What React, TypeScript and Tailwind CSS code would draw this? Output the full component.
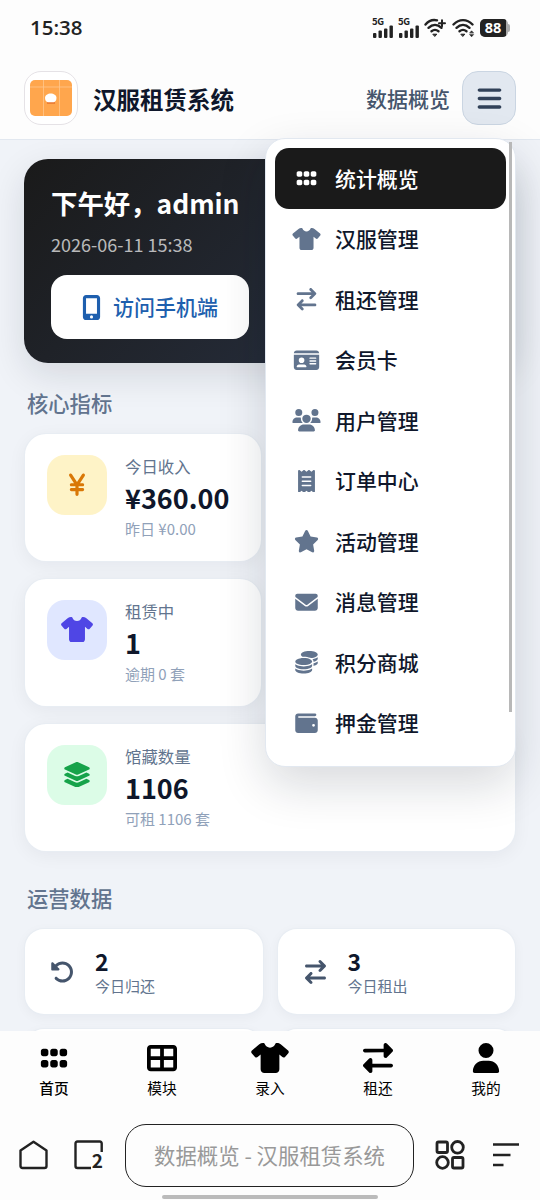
import type { ReactNode } from "react";
import type { IconType } from "react-icons";
import {
    FaArrowRightArrowLeft,
    FaBars,
    FaCoins,
    FaEnvelope,
    FaGrip,
    FaIdCard,
    FaLayerGroup,
    FaMobileScreenButton,
    FaReceipt,
    FaRightLeft,
    FaRotateLeft,
    FaShirt,
    FaStar,
    FaTableCellsLarge,
    FaUser,
    FaUsers,
    FaWallet,
    FaYenSign,
} from "react-icons/fa6";

const menuItems: { icon: IconType; label: string }[] = [
    { icon: FaGrip, label: "统计概览" },
    { icon: FaShirt, label: "汉服管理" },
    { icon: FaArrowRightArrowLeft, label: "租还管理" },
    { icon: FaIdCard, label: "会员卡" },
    { icon: FaUsers, label: "用户管理" },
    { icon: FaReceipt, label: "订单中心" },
    { icon: FaStar, label: "活动管理" },
    { icon: FaEnvelope, label: "消息管理" },
    { icon: FaCoins, label: "积分商城" },
    { icon: FaWallet, label: "押金管理" },
];

const navItems: { icon: IconType; label: string }[] = [
    { icon: FaGrip, label: "首页" },
    { icon: FaTableCellsLarge, label: "模块" },
    { icon: FaShirt, label: "录入" },
    { icon: FaRightLeft, label: "租还" },
    { icon: FaUser, label: "我的" },
];

function Signal() {
    return (
        <div className="w-[21px]">
            <div className="h-[7px] text-[9.5px] leading-[7px] font-bold tracking-tight">5G</div>
            <svg viewBox="0 0 21 13" className="block h-[13px] w-[21px]" fill="currentColor">
                <rect x="1" y="8" width="3.4" height="5" rx="1" />
                <rect x="6.5" y="5.5" width="3.4" height="7.5" rx="1" />
                <rect x="12" y="3.5" width="3.4" height="9.5" rx="1" />
                <rect x="17.5" y="0.5" width="3.4" height="12.5" rx="1" />
            </svg>
        </div>
    );
}

function Wifi({ plus }: { plus?: boolean }) {
    return (
        <svg viewBox="0 0 23 20" className="h-5 w-[23px]" fill="none" stroke="currentColor" strokeWidth="2.4" strokeLinecap="round">
            <path d={plus ? "M1.5 6.5C5 2.3 9.5 1.5 13 2.3" : "M1.5 6.5C7 .7 15 .7 20.5 6.5"} />
            <path d="M4.5 9.8C8.5 6 13.5 6 17.5 9.8" />
            <path d="M7.5 13.2C10 11.3 12 11.3 14.5 13.2" />
            <path d="M9.2 16.2h3.6L11 18.2z" fill="currentColor" strokeWidth="1" />
            {plus ? (
                <path d="M18 2.2v6M15 5.2h6" strokeWidth="2" />
            ) : (
                <path d="M17.8 14.8l1.8-2 1.8 2zM17.8 16.8l1.8 2 1.8-2z" fill="currentColor" strokeWidth=".6" />
            )}
        </svg>
    );
}

function StatusBar() {
    return (
        <div className="flex h-14 items-center justify-between px-[30px] pb-px text-[#222]">
            <span className="font-['Open_Sans',sans-serif] text-[20.5px] font-semibold">15:38</span>
            <div className="flex items-center gap-[5px]">
                <Signal />
                <Signal />
                <Wifi plus />
                <Wifi />
                <div className="flex items-center">
                    <div className="flex h-[18px] w-[28px] overflow-hidden rounded-[5px] bg-[#aaa]">
                        <span className="w-[26px] bg-[#222] text-center font-['Open_Sans',sans-serif] text-[14.5px] leading-[18px] font-bold text-white">
                            88
                        </span>
                    </div>
                    <div className="h-2 w-[2px] rounded-r-full bg-[#aaa]" />
                </div>
            </div>
        </div>
    );
}

function Logo() {
    return (
        <div className="flex h-[54px] w-[54px] items-center justify-center rounded-[17px] border border-[#e5e2e6] bg-white">
            <svg viewBox="0 0 42 36" className="h-9 w-[42px]">
                <rect width="42" height="36" rx="5" fill="#ffa64d" />
                <path d="M0 7h42M13.5 0v36M29.5 0v36" stroke="#ffc68d" strokeWidth=".8" />
                <path d="M15 18c0-6 11.5-6 11.5 0 0 3-2 4-3 4.5h-5.5c-1-.5-3-1.5-3-4.5z" fill="#fff" />
                <path d="M17 23h8" stroke="#dc5a1e" strokeWidth="1" />
            </svg>
        </div>
    );
}

function Menu() {
    return (
        <div className="absolute top-[138px] left-[265px] z-20 h-[629px] w-[251px] rounded-[20px] border border-slate-200 bg-white px-[9px] pt-[9px] shadow-[0_18px_48px_rgba(15,23,42,0.16)]">
            {menuItems.map(({ icon: Icon, label }, i) => (
                <div
                    key={label}
                    className={`flex h-[60.5px] w-[231px] items-center gap-[14px] rounded-[14px] pl-[17px] text-[20.9px] font-medium ${
                        i === 0 ? "bg-[#1a1a1a] text-white" : "text-slate-900"
                    }`}
                >
                    <span className={`flex w-[29px] justify-center ${i === 0 ? "text-white" : "text-slate-500"}`}>
                        <Icon className="h-[22.5px] w-[29px] shrink-0" />
                    </span>
                    {label}
                </div>
            ))}
            <div className="absolute top-[3px] right-[3px] h-[570px] w-[3px] bg-[#b8b8b8]" />
        </div>
    );
}

interface StatProps {
    icon: IconType;
    tone: string;
    label: string;
    value: string;
    note: string;
    wide?: boolean;
}

function StatCard({ icon: Icon, tone, label, value, note, wide }: StatProps) {
    return (
        <div
            className={`flex h-[129px] rounded-[22px] border border-slate-200/80 bg-white pt-[21px] pl-[22px] shadow-[0_4px_18px_rgba(15,23,42,0.05)] ${
                wide ? "col-span-2" : "col-start-1"
            }`}
        >
            <div className={`flex h-[60px] w-[60px] items-center justify-center rounded-[18px] pb-px ${tone}`}>
                <Icon className="h-[25.5px] w-8" />
            </div>
            <div className="ml-[18px]">
                <div className="text-[16.4px] leading-[23px] text-slate-500">{label}</div>
                <div className="mt-px text-[27px] leading-[38px] font-bold text-slate-900">{value}</div>
                <div className="mt-px text-[15px] leading-[22px] text-slate-400">{note}</div>
            </div>
        </div>
    );
}

function SmallCard({ children }: { children?: ReactNode }) {
    return (
        <div className="flex h-[87px] items-center rounded-[20px] border border-slate-200/80 bg-white pl-[25px] shadow-[0_3px_12px_rgba(15,23,42,0.04)]">
            {children}
        </div>
    );
}

function SmallStat({ icon: Icon, value, label }: { icon: IconType; value: string; label: string }) {
    return (
        <SmallCard>
            <Icon className="h-6 w-[25px] shrink-0 text-slate-600" />
            <div className="ml-5">
                <div className="text-[23px] leading-[28px] font-bold text-slate-900">{value}</div>
                <div className="text-[15px] leading-[22px] text-slate-500">{label}</div>
            </div>
        </SmallCard>
    );
}

function BrowserBar() {
    return (
        <div className="relative flex h-[89px] items-center pt-1 pb-[5px]">
            <svg viewBox="0 0 30 30" className="ml-[19px] h-[30px] w-[30px]" fill="none" stroke="#222" strokeWidth="2.4" strokeLinejoin="round">
                <path d="M1.5 10.5L14.5 1.8l13 8.7V26q0 2-2 2h-22q-2 0-2-2z" />
            </svg>
            <div className="relative ml-[25px] h-[30px] w-[30px]">
                <svg viewBox="0 0 30 30" className="h-[30px] w-[30px]" fill="none" stroke="#222" strokeWidth="2.4">
                    <path d="M27.7 12V3.5q0-2-2-2H3.5q-2 0-2 2V26q0 2 2 2H17" />
                </svg>
                <span className="absolute right-px bottom-px text-[19px] leading-[19px] font-bold text-[#222]">2</span>
            </div>
            <div className="ml-[21px] flex h-[63px] w-[289px] items-center justify-center rounded-[21px] border-[1.5px] border-[#222] text-[21.4px] text-[#999]">
                数据概览 - 汉服租赁系统
            </div>
            <svg viewBox="0 0 30 30" className="ml-[21px] h-[30px] w-[30px]" fill="none" stroke="#222" strokeWidth="2.8">
                <rect x="2" y="2" width="10.5" height="10.5" rx="1.5" />
                <circle cx="22.5" cy="7.3" r="5.8" />
                <circle cx="7.5" cy="22.5" r="5.8" />
                <rect x="17.5" y="17.5" width="10.5" height="10.5" rx="1.5" />
            </svg>
            <svg viewBox="0 0 27 26" className="ml-[27px] h-[26px] w-[27px]" stroke="#222" strokeWidth="2.6">
                <path d="M1 2.5h26M1 13h17.5M1 23h10.5" />
            </svg>
            <div className="absolute bottom-px left-[162px] h-1 w-[216px] rounded-full bg-[#bbb]" />
        </div>
    );
}

export default function App() {
    return (
        <div className="relative flex h-[1200px] w-[540px] flex-col overflow-hidden bg-[#fdfdfd] font-['Noto_Sans_CJK_SC',sans-serif]">
            <StatusBar />
            <header className="flex h-[84px] shrink-0 items-center border-b border-slate-200 px-6 pt-px">
                <Logo />
                <h1 className="ml-[15px] pt-[3px] text-[23.5px] font-bold text-slate-900">汉服租赁系统</h1>
                <span className="ml-auto pt-px text-[21px] font-medium text-slate-600">数据概览</span>
                <button className="ml-3 flex h-[54px] w-[54px] items-center justify-center rounded-[16px] border border-slate-300 bg-slate-200 text-slate-700">
                    <FaBars className="h-[27px] w-[27px]" />
                </button>
            </header>
            <Menu />

            <main className="h-[891px] shrink-0 overflow-hidden bg-[#f0f3f8] px-[24px] pt-[19px]">
                <section className="h-[204px] rounded-[24px] bg-linear-135 from-[#1a1a1a] to-[#2a3448] px-[27px] pt-[25px] shadow-[0_12px_36px_rgba(15,23,42,0.12)]">
                    <h2 className="text-[26.4px] leading-[38px] font-bold text-white">下午好，admin</h2>
                    <p className="mt-[9px] text-[18px] leading-[26px] text-white/70">2026-06-11 15:38</p>
                    <button className="mt-[18px] flex h-[64px] w-[198px] items-center rounded-[16px] bg-white pl-[31px] text-[21px] font-medium text-[#1e5fae]">
                        <FaMobileScreenButton className="mr-[12px] h-[25px] w-[19px]" />
                        <span>访问手机端</span>
                    </button>
                </section>

                <h3 className="mt-[25px] pl-[3px] text-[21.3px] leading-[30px] font-medium text-slate-500">核心指标</h3>
                <div className="mt-[15px] grid grid-cols-2 gap-4">
                    <StatCard icon={FaYenSign} tone="bg-[#fef3c7] text-[#d97706]" label="今日收入" value="¥360.00" note="昨日 ¥0.00" />
                    <StatCard icon={FaShirt} tone="bg-[#e0e7ff] text-[#4f46e5]" label="租赁中" value="1" note="逾期 0 套" />
                    <StatCard icon={FaLayerGroup} tone="bg-[#dcfce7] text-[#16a34a]" label="馆藏数量" value="1106" note="可租 1106 套" wide />
                </div>

                <h3 className="mt-[31px] pl-[3px] text-[21.3px] leading-[30px] font-medium text-slate-500">运营数据</h3>
                <div className="mt-[15px] grid grid-cols-2 gap-[13px]">
                    <SmallStat icon={FaRotateLeft} value="2" label="今日归还" />
                    <SmallStat icon={FaArrowRightArrowLeft} value="3" label="今日租出" />
                    <SmallCard />
                    <SmallCard />
                </div>
            </main>

            <nav className="grid h-20 shrink-0 grid-cols-5 bg-[#fdfdfd]">
                {navItems.map(({ icon: Icon, label }, i) => (
                    <div key={label} className="flex flex-col items-center pt-[12px] text-black">
                        <Icon className="h-[30px] w-[38px]" />
                        <span className={`mt-[4px] text-[14.7px] leading-[22px] ${i === 0 ? "font-medium" : ""}`}>{label}</span>
                    </div>
                ))}
            </nav>
            <BrowserBar />
        </div>
    );
}
